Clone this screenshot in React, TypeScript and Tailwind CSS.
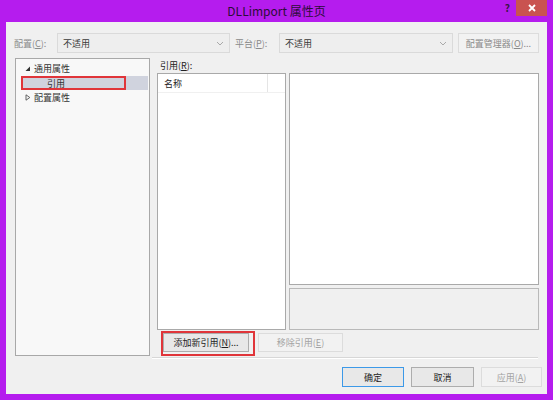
import { type ReactNode } from 'react';

function Acc({ children }: { children: ReactNode }) {
  return <span className="underline underline-offset-1">{children}</span>;
}

function Chevron() {
  return (
    <svg width="8" height="5" viewBox="0 0 8 5" className="shrink-0">
      <polyline points="1,1 4,4 7,1" fill="none" stroke="#a9a9a9" strokeWidth="1" />
    </svg>
  );
}

function ComboBox({ width, value }: { width: string; value: string }) {
  return (
    <div className={`${width} h-[20px] flex items-center justify-between pl-[5px] pr-[5px] bg-[#eeeeee] border border-[#dadada]`}>
      <span className="text-[#3a3a3a]">{value}</span>
      <Chevron />
    </div>
  );
}

interface ButtonProps {
  width: string;
  height?: string;
  disabled?: boolean;
  primary?: boolean;
  children: ReactNode;
}

function Button({ width, height = 'h-[19px]', disabled, primary, children }: ButtonProps) {
  const border = primary ? 'border-[#3c99e8]' : disabled ? 'border-[#dcdcdc]' : 'border-[#adadad]';
  const bg = disabled ? 'bg-[#f2f2f2]' : 'bg-[#e8e8e8]';
  const text = disabled ? 'text-[#a3a3a3]' : 'text-[#222222]';
  return (
    <div className={`${width} ${height} ${border} ${bg} ${text} border flex items-center justify-center shrink-0`}>
      {children}
    </div>
  );
}

function ExpandedArrow() {
  return (
    <svg width="6" height="6" viewBox="0 0 6 6" className="shrink-0">
      <polygon points="5,0.5 5,5 0.5,5" fill="#333333" />
    </svg>
  );
}

function CollapsedArrow() {
  return (
    <svg width="6" height="7" viewBox="0 0 6 7" className="shrink-0">
      <polygon points="1,0.8 4.8,3.5 1,6.2" fill="none" stroke="#555555" strokeWidth="0.9" />
    </svg>
  );
}

export default function App() {
  return (
    <div className="w-[553px] h-[400px] bg-[#b51cee] flex flex-col font-['Noto_Sans_CJK_SC','Noto_Sans',sans-serif] text-[9px] leading-none select-none">
      {/* title bar */}
      <div className="h-[22px] flex items-start shrink-0">
        <div className="flex-1" />
        <div className="h-[22px] flex items-center text-[12px] text-[#2c0c38]">DLLimport 属性页</div>
        <div className="flex-1 flex justify-end items-start">
          <span className="mt-[3px] mr-[6px] text-[10px] font-bold text-[#3a1448]">?</span>
          <div className="w-[31px] h-[16px] mr-[6px] bg-[#c95350] flex items-center justify-center">
            <svg width="8" height="8" viewBox="0 0 8 8">
              <path d="M1 1 L7 7 M7 1 L1 7" stroke="#ffffff" strokeWidth="1.8" />
            </svg>
          </div>
        </div>
      </div>

      {/* client area */}
      <div className="flex-1 mx-[6px] mb-[6px] bg-[#f0f0f0] flex flex-col pt-[11px]">
        <div className="flex items-center h-[20px] ml-[8px]">
          <span className="w-[43px] text-[#8a8a8a]">
            配置(<Acc>C</Acc>):
          </span>
          <ComboBox width="w-[173px]" value="不适用" />
          <span className="w-[44px] ml-[5px] text-[#8a8a8a]">
            平台(<Acc>P</Acc>):
          </span>
          <ComboBox width="w-[174px]" value="不适用" />
          <div className="ml-[5px]">
            <Button width="w-[81px]" height="h-[20px]" disabled>
              <span className="text-[#8a8a8a]">
                配置管理器(<Acc>O</Acc>)...
              </span>
            </Button>
          </div>
        </div>

        <div className="flex mt-[5px] ml-[9px]">
          {/* tree */}
          <div className="w-[135px] h-[298px] bg-[#f8f8f8] border border-[#a8a8a8] pt-[2px] text-[#333333]">
            <div className="h-[15px] flex items-center pl-[9px] gap-[3px]">
              <ExpandedArrow />
              <span>通用属性</span>
            </div>
            <div className="h-[14px] ml-[5px] mr-px bg-[#d0d3de] flex items-center">
              <div className="w-[105px] h-[14px] border-2 border-[#e0353a] flex items-center pl-[24px]">引用</div>
            </div>
            <div className="h-[15px] flex items-center pl-[9px] gap-[3px]">
              <CollapsedArrow />
              <span>配置属性</span>
            </div>
          </div>

          {/* references */}
          <div className="w-[382px] ml-[7px] flex flex-col">
            <div className="h-[15px] flex items-center pl-[3px] text-[#222222]">
              引用(<Acc>R</Acc>):
            </div>
            <div className="flex h-[257px]">
              <div className="w-[129px] bg-white border border-[#a9a9a9] flex flex-col">
                <div className="h-[19px] flex items-center border-b border-[#f0f0f0]">
                  <div className="w-[110px] h-full flex items-center pl-[6px] border-r border-[#e5e5e5] text-[#222222]">名称</div>
                </div>
              </div>
              <div className="w-[250px] ml-[3px] flex flex-col">
                <div className="h-[212px] bg-white border border-[#a9a9a9]" />
                <div className="h-[42px] mt-[3px] bg-[#f0f0f0] border border-[#b9b9b9]" />
              </div>
            </div>
            <div className="flex mt-px">
              <div className="ml-[4px] w-[94px] h-[25px] border-2 border-[#e0353a]">
                <Button width="w-[86px]">
                  添加新引用(<Acc>N</Acc>)...
                </Button>
              </div>
              <div className="ml-[3px] mt-[2px]">
                <Button width="w-[85px]" disabled>
                  移除引用(<Acc>E</Acc>)
                </Button>
              </div>
            </div>
          </div>
        </div>

        <div className="ml-[146px] w-[386px] mt-px h-[2px] border-t border-[#d7d7d7] border-b border-b-white" />

        <div className="flex justify-end gap-[7px] pr-[5px] mt-[8px]">
          <Button width="w-[62px]" height="h-[20px]" primary>
            确定
          </Button>
          <Button width="w-[63px]" height="h-[20px]">
            取消
          </Button>
          <Button width="w-[61px]" height="h-[20px]" disabled>
            应用(<Acc>A</Acc>)
          </Button>
        </div>
      </div>
    </div>
  );
}
